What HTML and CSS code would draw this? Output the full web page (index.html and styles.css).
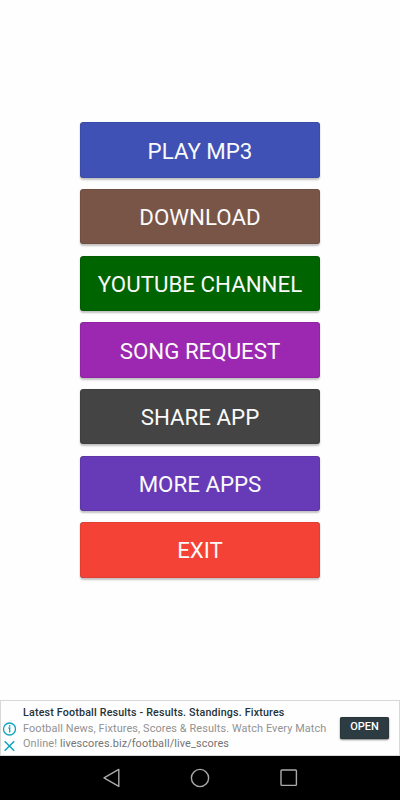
FILE: index.html
```html
<!DOCTYPE html>
<html lang="en">
<head>
<meta charset="utf-8">
<title>Music menu</title>
<link rel="stylesheet" href="styles.css">
</head>
<body>
<main class="menu">
  <button class="item play">PLAY MP3</button>
  <button class="item download">DOWNLOAD</button>
  <button class="item channel">YOUTUBE CHANNEL</button>
  <button class="item request">SONG REQUEST</button>
  <button class="item share">SHARE APP</button>
  <button class="item more">MORE APPS</button>
  <button class="item exit">EXIT</button>
</main>
<aside class="ad">
  <div class="ad-icons">
    <svg width="14" height="14" viewBox="0 0 14 14" fill="none" stroke="#10a4bd" stroke-width="1.3"><circle cx="7.5" cy="7" r="6"/><path d="M6.4 6h1.3v4.4" /><path d="M6.9 3.9h1.5" stroke-width="1.6"/></svg>
    <svg width="14" height="14" viewBox="0 0 14 14" fill="none" stroke="#10a4bd" stroke-width="1.5"><path d="M2.6 2.3l9.6 9.4M12.2 2.3l-9.6 9.4"/></svg>
  </div>
  <div class="ad-text">
    <div class="ad-title">Latest Football Results - Results. Standings. Fixtures</div>
    <div class="ad-line first">Football News, Fixtures, Scores &amp; Results. Watch Every Match</div>
    <div class="ad-line second">Online! <span class="ad-link">livescores.biz/football/live_scores</span></div>
  </div>
  <button class="open">OPEN</button>
</aside>
<nav class="system">
  <svg width="20" height="20" viewBox="0 0 20 20"><path d="M17.8 1.4v17L3 9.9z"/></svg>
  <svg width="20" height="20" viewBox="0 0 20 20"><circle cx="10" cy="10" r="8.6"/></svg>
  <svg width="20" height="20" viewBox="0 0 20 20"><rect x="2" y="2" width="15.4" height="15.4" rx=".8"/></svg>
</nav>
</body>
</html>
```
FILE: styles.css
```css
* { box-sizing: border-box; }
body {
  margin: 0;
  width: 400px;
  height: 800px;
  display: flex;
  flex-direction: column;
  background: #fefefe;
  font-family: Roboto, "Liberation Sans", sans-serif;
  overflow: hidden;
}
button { border: 0; padding: 0; margin: 0; font-family: inherit; color: #fff; }
.menu {
  height: 700px;
  flex: none;
  display: flex;
  flex-direction: column;
  align-items: center;
  justify-content: center;
  gap: 11.1px;
}
.item {
  width: 240px;
  height: 55.57px;
  border-radius: 3.5px;
  font-size: 22.3px;
  line-height: 26px;
  padding-top: 1px;
  color: #fafafa;
  box-shadow: 0 1.5px 2px rgba(0, 0, 0, .24), inset 0 0 1px rgba(0, 0, 0, .7);
}
.play { background: #3f51b5; }
.download { background: #795548; }
.channel { background: #006400; }
.request { background: #9c27b0; }
.share { background: #444; }
.more { background: #673ab7; }
.exit { background: #f44336; }
.ad {
  height: 56px;
  flex: none;
  display: flex;
  align-items: flex-start;
  border: 1px solid #d8d8d8;
  background: #fefefe;
}
.ad-icons { width: 22px; padding: 21px 0 0 1px; display: flex; flex-direction: column; gap: 3px; }
.ad-text { width: 317px; white-space: nowrap; }
.ad-title { margin-top: 5px; font-size: 10.7px; line-height: 13px; letter-spacing: .18px; font-weight: 500; color: #263238; }
.ad-line { font-size: 10.9px; line-height: 14px; letter-spacing: .1px; color: #929292; }
.first { margin-top: 3px; }
.second { line-height: 15px; }
.ad-link { color: #747474; }
.open {
  width: 49px;
  height: 22px;
  margin-top: 16px;
  border-radius: 2px;
  background: #2d3b43;
  font-size: 11px;
  font-weight: 500;
  line-height: 13px;
  padding-bottom: 4px;
  box-shadow: 0 1px 2px rgba(0, 0, 0, .5), inset 0 0 1px #000;
}
.system {
  height: 44px;
  flex: none;
  background: #000;
  display: flex;
  justify-content: center;
  align-items: center;
  gap: 69px;
}
.system svg { fill: none; stroke: #aaa; stroke-width: 1.4; stroke-linejoin: round; }
```
